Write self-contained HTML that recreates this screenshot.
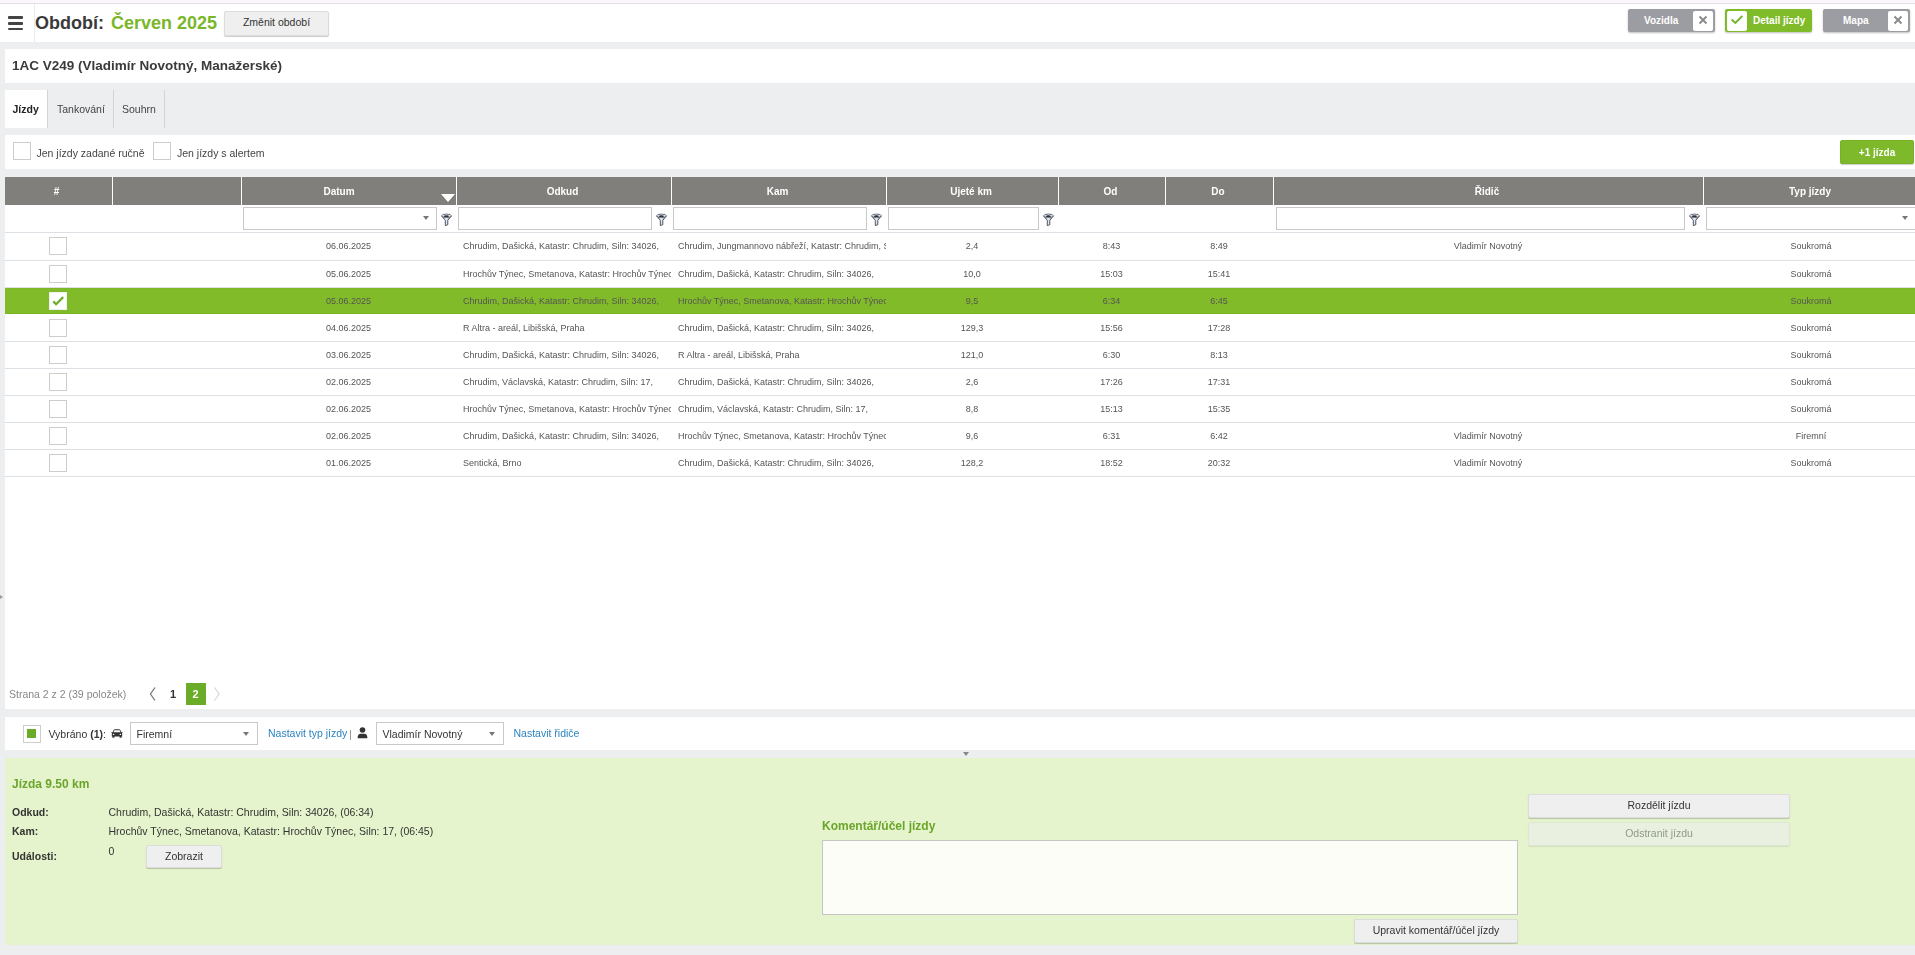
<!DOCTYPE html>
<html><head><meta charset="utf-8">
<style>
*{box-sizing:border-box;margin:0;padding:0}
html,body{width:1915px;height:955px;overflow:hidden}
body{background:#edeef0;font-family:"Liberation Sans",sans-serif;color:#444;position:relative}
.a{position:absolute}
.t{position:absolute;white-space:nowrap;line-height:1}
.w{background:#fff}
.btn{position:absolute;background:#efefef;border:1px solid #dcdcdc;border-radius:2px;box-shadow:0 1px 1px rgba(0,0,0,.2);color:#333;text-align:center;white-space:nowrap;font-size:10.5px}
.cb{position:absolute;width:18px;height:18px;border:1px solid #cdcdcd;background:#fff}
.hd{position:absolute;top:177px;height:28px;background:#817f7c;color:#fff;font-weight:bold;font-size:10px;text-align:center;line-height:30px;padding-right:3px}
.inp{position:absolute;top:207px;height:23px;border:1px solid #c9c9c9;background:#fff}
.ln{position:absolute;left:5px;width:1910px;height:1px;background:#dcdfe3}
.row{position:absolute;left:5px;width:1910px}
.c{position:absolute;top:0;height:100%;font-size:9px;color:#555;white-space:nowrap;overflow:hidden;display:flex;align-items:center}
.ctr{justify-content:center}
.fun{position:absolute;top:213px;width:12px;height:13px}
.dd{position:absolute;width:0;height:0;border-left:3px solid transparent;border-right:3px solid transparent;border-top:4px solid #777}
.tog{position:absolute;top:9px;height:23px;border-radius:2px;box-shadow:0 1px 2px rgba(0,0,0,.25);color:#fff;font-weight:bold;font-size:10px;white-space:nowrap}
.tog .bx{position:absolute;top:2px;width:20px;height:20px;background:#fff;border-radius:2px}
.tog .tx{position:absolute;top:1px;line-height:21px}
.lbl{position:absolute;font-size:10.5px;font-weight:bold;color:#333;white-space:nowrap;line-height:1}
.val{position:absolute;font-size:10.5px;color:#333;white-space:nowrap;line-height:1}
</style></head><body>
<!-- top pink strip -->
<div class="a" style="left:0;top:0;width:1915px;height:3px;background:#fdf6fd"></div>
<div class="a" style="left:0;top:3px;width:1915px;height:1px;background:#e4dfe8"></div>
<!-- header -->
<div class="a w" style="left:0;top:4px;width:1915px;height:38px"></div>
<div class="a" style="left:34px;top:4px;width:1px;height:38px;background:#ececec"></div>
<div class="a" style="left:8px;top:16px;width:15px;height:2.5px;background:#444;border-radius:1px"></div>
<div class="a" style="left:8px;top:22px;width:15px;height:2.5px;background:#444;border-radius:1px"></div>
<div class="a" style="left:8px;top:27.5px;width:15px;height:2.5px;background:#444;border-radius:1px"></div>
<div class="t" style="left:35px;top:14px;font-size:18px;font-weight:bold;color:#3a3a3a">Období:</div>
<div class="t" style="left:111px;top:14px;font-size:18px;font-weight:bold;color:#7ab629">Červen 2025</div>
<div class="btn" style="left:224px;top:11px;width:105px;height:25px;line-height:20px">Změnit období</div>
<!-- toggles -->
<div class="tog" style="left:1628px;width:87px;background:#9c9da2">
 <div class="tx" style="left:16px">Vozidla</div>
 <div class="bx" style="left:65px"><svg width="20" height="20" viewBox="0 0 20 20" style="position:absolute;left:0;top:0"><path d="M6.5 5.5L13.5 12.5M13.5 5.5L6.5 12.5" stroke="#8a8a8a" stroke-width="1.9"/></svg></div>
</div>
<div class="tog" style="left:1725px;width:87px;background:#80bb29">
 <div class="bx" style="left:2px"><svg width="20" height="20" viewBox="0 0 20 20" style="position:absolute;left:0;top:0"><path d="M4.6 8.4L8.4 11.9L15.3 5" stroke="#76b52a" stroke-width="2" fill="none"/></svg></div>
 <div class="tx" style="left:28px">Detail jízdy</div>
</div>
<div class="tog" style="left:1823px;width:87px;background:#9c9da2">
 <div class="tx" style="left:20px">Mapa</div>
 <div class="bx" style="left:65px"><svg width="20" height="20" viewBox="0 0 20 20" style="position:absolute;left:0;top:0"><path d="M6.5 5.5L13.5 12.5M13.5 5.5L6.5 12.5" stroke="#8a8a8a" stroke-width="1.9"/></svg></div>
</div>
<div class="a" style="left:0;top:0;width:1915px;height:955px;will-change:transform">
<!-- title panel -->
<div class="a w" style="left:5px;top:49px;width:1910px;height:34px"></div>
<div class="t" style="left:12px;top:59px;font-size:13.5px;font-weight:bold;color:#3a3a3a">1AC V249 (Vladimír Novotný, Manažerské)</div>
<!-- tabs -->
<div class="a w" style="left:5px;top:90px;width:42px;height:38px"></div>
<div class="a" style="left:47px;top:90px;width:1px;height:38px;background:#d3d3d3"></div>
<div class="a" style="left:113px;top:90px;width:1px;height:38px;background:#d3d3d3"></div>
<div class="a" style="left:164px;top:90px;width:1px;height:38px;background:#d3d3d3"></div>
<div class="t" style="left:12.5px;top:104px;font-size:10.5px;font-weight:bold;color:#222">Jízdy</div>
<div class="t" style="left:57px;top:104px;font-size:10.5px;color:#444">Tankování</div>
<div class="t" style="left:122px;top:104px;font-size:10.5px;color:#444">Souhrn</div>
<!-- filter panel -->
<div class="a w" style="left:5px;top:135px;width:1910px;height:34px"></div>
<div class="cb" style="left:13px;top:142px"></div>
<div class="t" style="left:36.5px;top:148px;font-size:10.5px;color:#444">Jen jízdy zadané ručně</div>
<div class="cb" style="left:153px;top:142px"></div>
<div class="t" style="left:177px;top:148px;font-size:10.5px;color:#444">Jen jízdy s alertem</div>
<div class="btn" style="left:1840px;top:140px;width:74px;height:24px;background:#7db92a;border-color:#78b326;color:#fff;font-weight:bold;font-size:10px;line-height:24px">+1 jízda</div>
<!-- table -->
<div class="a w" style="left:5px;top:177px;width:1910px;height:532px"></div>
<div class="hd" style="left:5px;width:107px;padding-right:4px;">#</div>
<div class="hd" style="left:113px;width:128px;"></div>
<div class="hd" style="left:242px;width:214px;padding-right:20px;">Datum</div>
<div class="hd" style="left:457px;width:214px;">Odkud</div>
<div class="hd" style="left:672px;width:214px;">Kam</div>
<div class="hd" style="left:887px;width:171px;">Ujeté km</div>
<div class="hd" style="left:1059px;width:106px;">Od</div>
<div class="hd" style="left:1166px;width:107px;">Do</div>
<div class="hd" style="left:1274px;width:429px;">Řidič</div>
<div class="hd" style="left:1704px;width:215px;">Typ jízdy</div>
<div class="a" style="left:112px;top:177px;width:1px;height:28px;background:#fff"></div>
<div class="a" style="left:241px;top:177px;width:1px;height:28px;background:#fff"></div>
<div class="a" style="left:456px;top:177px;width:1px;height:28px;background:#fff"></div>
<div class="a" style="left:671px;top:177px;width:1px;height:28px;background:#fff"></div>
<div class="a" style="left:886px;top:177px;width:1px;height:28px;background:#fff"></div>
<div class="a" style="left:1058px;top:177px;width:1px;height:28px;background:#fff"></div>
<div class="a" style="left:1165px;top:177px;width:1px;height:28px;background:#fff"></div>
<div class="a" style="left:1273px;top:177px;width:1px;height:28px;background:#fff"></div>
<div class="a" style="left:1703px;top:177px;width:1px;height:28px;background:#fff"></div>
<div class="a" style="left:441px;top:194px;width:0;height:0;border-left:7px solid transparent;border-right:7px solid transparent;border-top:8px solid #fff"></div>
<div class="inp" style="left:243px;width:194px"></div>
<div class="dd" style="left:423px;top:216px"></div>
<svg class="fun" style="left:441px" viewBox="0 0 12 13" width="12" height="13"><defs><linearGradient id="fg0" x1="0" y1="0" x2="1" y2="0"><stop offset="0" stop-color="#9aa3ae"/><stop offset=".45" stop-color="#e8eef6"/><stop offset="1" stop-color="#8d96a2"/></linearGradient></defs><path d="M0.7 3.1L4.3 7.3L4.3 12.6L6.8 11.7L6.8 7.3L10.3 3.1Z" fill="url(#fg0)" stroke="#3f4652" stroke-width="0.9" stroke-linejoin="round"/><ellipse cx="5.5" cy="2.8" rx="4.9" ry="1.7" fill="#e3e9f0" stroke="#59606b" stroke-width="0.9"/><ellipse cx="5.4" cy="3.2" rx="2.5" ry="0.85" fill="#2b313a"/></svg>
<div class="inp" style="left:458px;width:194px"></div>
<svg class="fun" style="left:656px" viewBox="0 0 12 13" width="12" height="13"><defs><linearGradient id="fg1" x1="0" y1="0" x2="1" y2="0"><stop offset="0" stop-color="#9aa3ae"/><stop offset=".45" stop-color="#e8eef6"/><stop offset="1" stop-color="#8d96a2"/></linearGradient></defs><path d="M0.7 3.1L4.3 7.3L4.3 12.6L6.8 11.7L6.8 7.3L10.3 3.1Z" fill="url(#fg1)" stroke="#3f4652" stroke-width="0.9" stroke-linejoin="round"/><ellipse cx="5.5" cy="2.8" rx="4.9" ry="1.7" fill="#e3e9f0" stroke="#59606b" stroke-width="0.9"/><ellipse cx="5.4" cy="3.2" rx="2.5" ry="0.85" fill="#2b313a"/></svg>
<div class="inp" style="left:673px;width:194px"></div>
<svg class="fun" style="left:871px" viewBox="0 0 12 13" width="12" height="13"><defs><linearGradient id="fg2" x1="0" y1="0" x2="1" y2="0"><stop offset="0" stop-color="#9aa3ae"/><stop offset=".45" stop-color="#e8eef6"/><stop offset="1" stop-color="#8d96a2"/></linearGradient></defs><path d="M0.7 3.1L4.3 7.3L4.3 12.6L6.8 11.7L6.8 7.3L10.3 3.1Z" fill="url(#fg2)" stroke="#3f4652" stroke-width="0.9" stroke-linejoin="round"/><ellipse cx="5.5" cy="2.8" rx="4.9" ry="1.7" fill="#e3e9f0" stroke="#59606b" stroke-width="0.9"/><ellipse cx="5.4" cy="3.2" rx="2.5" ry="0.85" fill="#2b313a"/></svg>
<div class="inp" style="left:888px;width:151px"></div>
<svg class="fun" style="left:1043px" viewBox="0 0 12 13" width="12" height="13"><defs><linearGradient id="fg3" x1="0" y1="0" x2="1" y2="0"><stop offset="0" stop-color="#9aa3ae"/><stop offset=".45" stop-color="#e8eef6"/><stop offset="1" stop-color="#8d96a2"/></linearGradient></defs><path d="M0.7 3.1L4.3 7.3L4.3 12.6L6.8 11.7L6.8 7.3L10.3 3.1Z" fill="url(#fg3)" stroke="#3f4652" stroke-width="0.9" stroke-linejoin="round"/><ellipse cx="5.5" cy="2.8" rx="4.9" ry="1.7" fill="#e3e9f0" stroke="#59606b" stroke-width="0.9"/><ellipse cx="5.4" cy="3.2" rx="2.5" ry="0.85" fill="#2b313a"/></svg>
<div class="inp" style="left:1276px;width:409px"></div>
<svg class="fun" style="left:1689px" viewBox="0 0 12 13" width="12" height="13"><defs><linearGradient id="fg4" x1="0" y1="0" x2="1" y2="0"><stop offset="0" stop-color="#9aa3ae"/><stop offset=".45" stop-color="#e8eef6"/><stop offset="1" stop-color="#8d96a2"/></linearGradient></defs><path d="M0.7 3.1L4.3 7.3L4.3 12.6L6.8 11.7L6.8 7.3L10.3 3.1Z" fill="url(#fg4)" stroke="#3f4652" stroke-width="0.9" stroke-linejoin="round"/><ellipse cx="5.5" cy="2.8" rx="4.9" ry="1.7" fill="#e3e9f0" stroke="#59606b" stroke-width="0.9"/><ellipse cx="5.4" cy="3.2" rx="2.5" ry="0.85" fill="#2b313a"/></svg>
<div class="inp" style="left:1706px;width:215px"></div>
<div class="dd" style="left:1902px;top:216px"></div>
<div class="ln" style="top:232px"></div>
<div class="ln" style="top:260px"></div>
<div class="cb" style="left:49px;top:237px"></div>
<div class="row" style="top:232px;height:27px">
 <div class="c ctr" style="left:236px;width:215px;">06.06.2025</div>
 <div class="c" style="left:451px;width:215px;padding-left:7px;">Chrudim, Dašická, Katastr: Chrudim, Siln: 34026,</div>
 <div class="c" style="left:666px;width:215px;padding-left:7px;">Chrudim, Jungmannovo nábřeží, Katastr: Chrudim, Siln: 17,</div>
 <div class="c ctr" style="left:881px;width:172px;">2,4</div>
 <div class="c ctr" style="left:1053px;width:107px;">8:43</div>
 <div class="c ctr" style="left:1160px;width:108px;">8:49</div>
 <div class="c ctr" style="left:1268px;width:430px;">Vladimír Novotný</div>
 <div class="c ctr" style="left:1698px;width:216px;">Soukromá</div>
</div>
<div class="ln" style="top:287px"></div>
<div class="cb" style="left:49px;top:265px"></div>
<div class="row" style="top:261px;height:26px">
 <div class="c ctr" style="left:236px;width:215px;">05.06.2025</div>
 <div class="c" style="left:451px;width:215px;padding-left:7px;">Hrochův Týnec, Smetanova, Katastr: Hrochův Týnec, Siln: 17,</div>
 <div class="c" style="left:666px;width:215px;padding-left:7px;">Chrudim, Dašická, Katastr: Chrudim, Siln: 34026,</div>
 <div class="c ctr" style="left:881px;width:172px;">10,0</div>
 <div class="c ctr" style="left:1053px;width:107px;">15:03</div>
 <div class="c ctr" style="left:1160px;width:108px;">15:41</div>
 <div class="c ctr" style="left:1698px;width:216px;">Soukromá</div>
</div>
<div class="a" style="left:5px;top:288px;width:1910px;height:26px;background:#82bb2a;border-top:1px solid #7db826;border-bottom:1px solid #78b421"></div>
<div class="cb" style="left:49px;top:292px;border-color:#f0f0f4"><svg width="16" height="16" viewBox="0 0 16 16" style="position:absolute;left:0;top:0"><path d="M3.3 8.4L6.1 11.2L13.2 4.1" stroke="#70ad27" stroke-width="2.2" fill="none"/></svg></div>
<div class="row" style="top:288px;height:26px">
 <div class="c ctr" style="left:236px;width:215px;">05.06.2025</div>
 <div class="c" style="left:451px;width:215px;padding-left:7px;">Chrudim, Dašická, Katastr: Chrudim, Siln: 34026,</div>
 <div class="c" style="left:666px;width:215px;padding-left:7px;">Hrochův Týnec, Smetanova, Katastr: Hrochův Týnec, Siln: 17,</div>
 <div class="c ctr" style="left:881px;width:172px;">9,5</div>
 <div class="c ctr" style="left:1053px;width:107px;">6:34</div>
 <div class="c ctr" style="left:1160px;width:108px;">6:45</div>
 <div class="c ctr" style="left:1698px;width:216px;">Soukromá</div>
</div>
<div class="ln" style="top:341px"></div>
<div class="cb" style="left:49px;top:319px"></div>
<div class="row" style="top:315px;height:26px">
 <div class="c ctr" style="left:236px;width:215px;">04.06.2025</div>
 <div class="c" style="left:451px;width:215px;padding-left:7px;">R Altra - areál, Libišská, Praha</div>
 <div class="c" style="left:666px;width:215px;padding-left:7px;">Chrudim, Dašická, Katastr: Chrudim, Siln: 34026,</div>
 <div class="c ctr" style="left:881px;width:172px;">129,3</div>
 <div class="c ctr" style="left:1053px;width:107px;">15:56</div>
 <div class="c ctr" style="left:1160px;width:108px;">17:28</div>
 <div class="c ctr" style="left:1698px;width:216px;">Soukromá</div>
</div>
<div class="ln" style="top:368px"></div>
<div class="cb" style="left:49px;top:346px"></div>
<div class="row" style="top:342px;height:26px">
 <div class="c ctr" style="left:236px;width:215px;">03.06.2025</div>
 <div class="c" style="left:451px;width:215px;padding-left:7px;">Chrudim, Dašická, Katastr: Chrudim, Siln: 34026,</div>
 <div class="c" style="left:666px;width:215px;padding-left:7px;">R Altra - areál, Libišská, Praha</div>
 <div class="c ctr" style="left:881px;width:172px;">121,0</div>
 <div class="c ctr" style="left:1053px;width:107px;">6:30</div>
 <div class="c ctr" style="left:1160px;width:108px;">8:13</div>
 <div class="c ctr" style="left:1698px;width:216px;">Soukromá</div>
</div>
<div class="ln" style="top:395px"></div>
<div class="cb" style="left:49px;top:373px"></div>
<div class="row" style="top:369px;height:26px">
 <div class="c ctr" style="left:236px;width:215px;">02.06.2025</div>
 <div class="c" style="left:451px;width:215px;padding-left:7px;">Chrudim, Václavská, Katastr: Chrudim, Siln: 17,</div>
 <div class="c" style="left:666px;width:215px;padding-left:7px;">Chrudim, Dašická, Katastr: Chrudim, Siln: 34026,</div>
 <div class="c ctr" style="left:881px;width:172px;">2,6</div>
 <div class="c ctr" style="left:1053px;width:107px;">17:26</div>
 <div class="c ctr" style="left:1160px;width:108px;">17:31</div>
 <div class="c ctr" style="left:1698px;width:216px;">Soukromá</div>
</div>
<div class="ln" style="top:422px"></div>
<div class="cb" style="left:49px;top:400px"></div>
<div class="row" style="top:396px;height:26px">
 <div class="c ctr" style="left:236px;width:215px;">02.06.2025</div>
 <div class="c" style="left:451px;width:215px;padding-left:7px;">Hrochův Týnec, Smetanova, Katastr: Hrochův Týnec, Siln: 17,</div>
 <div class="c" style="left:666px;width:215px;padding-left:7px;">Chrudim, Václavská, Katastr: Chrudim, Siln: 17,</div>
 <div class="c ctr" style="left:881px;width:172px;">8,8</div>
 <div class="c ctr" style="left:1053px;width:107px;">15:13</div>
 <div class="c ctr" style="left:1160px;width:108px;">15:35</div>
 <div class="c ctr" style="left:1698px;width:216px;">Soukromá</div>
</div>
<div class="ln" style="top:449px"></div>
<div class="cb" style="left:49px;top:427px"></div>
<div class="row" style="top:423px;height:26px">
 <div class="c ctr" style="left:236px;width:215px;">02.06.2025</div>
 <div class="c" style="left:451px;width:215px;padding-left:7px;">Chrudim, Dašická, Katastr: Chrudim, Siln: 34026,</div>
 <div class="c" style="left:666px;width:215px;padding-left:7px;">Hrochův Týnec, Smetanova, Katastr: Hrochův Týnec, Siln: 17,</div>
 <div class="c ctr" style="left:881px;width:172px;">9,6</div>
 <div class="c ctr" style="left:1053px;width:107px;">6:31</div>
 <div class="c ctr" style="left:1160px;width:108px;">6:42</div>
 <div class="c ctr" style="left:1268px;width:430px;">Vladimír Novotný</div>
 <div class="c ctr" style="left:1698px;width:216px;">Firemní</div>
</div>
<div class="ln" style="top:476px"></div>
<div class="cb" style="left:49px;top:454px"></div>
<div class="row" style="top:450px;height:26px">
 <div class="c ctr" style="left:236px;width:215px;">01.06.2025</div>
 <div class="c" style="left:451px;width:215px;padding-left:7px;">Sentická, Brno</div>
 <div class="c" style="left:666px;width:215px;padding-left:7px;">Chrudim, Dašická, Katastr: Chrudim, Siln: 34026,</div>
 <div class="c ctr" style="left:881px;width:172px;">128,2</div>
 <div class="c ctr" style="left:1053px;width:107px;">18:52</div>
 <div class="c ctr" style="left:1160px;width:108px;">20:32</div>
 <div class="c ctr" style="left:1268px;width:430px;">Vladimír Novotný</div>
 <div class="c ctr" style="left:1698px;width:216px;">Soukromá</div>
</div>
<!-- left splitter arrow -->
<div class="a" style="left:0;top:595px;width:0;height:0;border-top:2px solid transparent;border-bottom:2px solid transparent;border-left:3px solid #999"></div>
<!-- pagination -->
<div class="t" style="left:9px;top:689px;font-size:10.5px;color:#888">Strana 2 z 2 (39 položek)</div>
<svg class="a" style="left:149px;top:686px" width="8" height="16" viewBox="0 0 8 16"><path d="M6 1.5L1.5 8L6 14.5" stroke="#777" stroke-width="1.3" fill="none"/></svg>
<div class="t" style="left:170px;top:689px;font-size:11px;font-weight:bold;color:#333">1</div>
<div class="a" style="left:186px;top:683px;width:20px;height:22px;background:#6aab28"></div>
<div class="t" style="left:192.5px;top:689px;font-size:11px;font-weight:bold;color:#fff">2</div>
<svg class="a" style="left:213px;top:686px" width="8" height="16" viewBox="0 0 8 16"><path d="M1.5 1.5L6 8L1.5 14.5" stroke="#d8d8d8" stroke-width="1.3" fill="none"/></svg>
<!-- selection bar -->
<div class="a w" style="left:5px;top:717px;width:1910px;height:33px"></div>
<div class="cb" style="left:23px;top:725px"><div class="a" style="left:3px;top:3px;width:9px;height:9px;background:#6aab28"></div></div>
<div class="t" style="left:48.5px;top:729px;font-size:10.5px;color:#333">Vybráno <b>(1)</b>:</div>
<svg class="a" style="left:111px;top:728.5px" width="12" height="9" viewBox="0 0 12 10" preserveAspectRatio="none"><path d="M2.6 1.2C2.9 0.5 3.4 0.3 4 0.3L8 0.3C8.6 0.3 9.1 0.5 9.4 1.2L10.4 3.6L11.2 3.4C11.6 3.4 11.8 3.8 11.5 4.1L10.9 4.6L11.2 5.4L11.2 8.2L10.6 8.2L10.6 9.4C10.6 9.7 10.4 9.8 10.1 9.8L9.1 9.8C8.8 9.8 8.6 9.7 8.6 9.4L8.6 8.2L3.4 8.2L3.4 9.4C3.4 9.7 3.2 9.8 2.9 9.8L1.9 9.8C1.6 9.8 1.4 9.7 1.4 9.4L1.4 8.2L0.8 8.2L0.8 5.4L1.1 4.6L0.5 4.1C0.2 3.8 0.4 3.4 0.8 3.4L1.6 3.6Z M3.3 1.5L2.5 3.7L9.5 3.7L8.7 1.5Z M2.6 5.2A0.8 0.8 0 1 0 2.6 6.8A0.8 0.8 0 1 0 2.6 5.2Z M9.4 5.2A0.8 0.8 0 1 0 9.4 6.8A0.8 0.8 0 1 0 9.4 5.2Z" fill="#333" fill-rule="evenodd"/></svg>
<div class="a" style="left:130px;top:722px;width:128px;height:23px;border:1px solid #c9c9c9;background:#fff"></div>
<div class="t" style="left:136.5px;top:729px;font-size:10.5px;color:#333">Firemní</div>
<div class="dd" style="left:243px;top:732px"></div>
<div class="t" style="left:268px;top:727.5px;font-size:10.5px;color:#2b84c0">Nastavit typ jízdy</div>
<div class="a" style="left:350px;top:730px;width:1.3px;height:10px;background:#999"></div>
<svg class="a" style="left:357px;top:727px" width="11" height="12" viewBox="0 0 11 12"><circle cx="5.5" cy="3" r="2.8" fill="#333"/><path d="M0.6 11.2C0.6 8 2 6.8 3.6 6.8L7.4 6.8C9 6.8 10.4 8 10.4 11.2Z" fill="#333"/></svg>
<div class="a" style="left:376px;top:722px;width:128px;height:23px;border:1px solid #c9c9c9;background:#fff"></div>
<div class="t" style="left:382.5px;top:729px;font-size:10.5px;color:#333">Vladimír Novotný</div>
<div class="dd" style="left:489px;top:732px"></div>
<div class="t" style="left:513.5px;top:727.5px;font-size:10.5px;color:#2b84c0">Nastavit řidiče</div>
<!-- splitter handle -->
<div class="a" style="left:963px;top:752px;width:0;height:0;border-left:3px solid transparent;border-right:3px solid transparent;border-top:4px solid #888"></div>
<!-- detail panel -->
<div class="a" style="left:5px;top:758px;width:1910px;height:187px;background:#e5f4cc"></div>
<div class="t" style="left:12px;top:778px;font-size:12px;font-weight:bold;color:#6ba52b">Jízda 9.50 km</div>
<div class="lbl" style="left:12px;top:807px">Odkud:</div>
<div class="val" style="left:108.5px;top:807px">Chrudim, Dašická, Katastr: Chrudim, Siln: 34026, (06:34)</div>
<div class="lbl" style="left:12px;top:826px">Kam:</div>
<div class="val" style="left:108.5px;top:826px">Hrochův Týnec, Smetanova, Katastr: Hrochův Týnec, Siln: 17, (06:45)</div>
<div class="lbl" style="left:12px;top:851px">Události:</div>
<div class="val" style="left:108.5px;top:846px">0</div>
<div class="btn" style="left:146px;top:845px;width:76px;height:23px;line-height:20px">Zobrazit</div>
<div class="t" style="left:822px;top:820px;font-size:12px;font-weight:bold;color:#6ba52b">Komentář/účel jízdy</div>
<div class="a" style="left:822px;top:840px;width:696px;height:75px;border:1px solid #c6c6c6;background:#fdfdf8"></div>
<div class="btn" style="left:1354px;top:919px;width:164px;height:24px;line-height:21px">Upravit komentář/účel jízdy</div>
<div class="btn" style="left:1528px;top:794px;width:262px;height:24px;line-height:21px">Rozdělit jízdu</div>
<div class="btn" style="left:1528px;top:822px;width:262px;height:24px;line-height:21px;background:#eaf0e0;border-color:#e0e6d6;color:#8f9a88;box-shadow:0 1px 1px rgba(0,0,0,.08)">Odstranit jízdu</div>
</body></html>
